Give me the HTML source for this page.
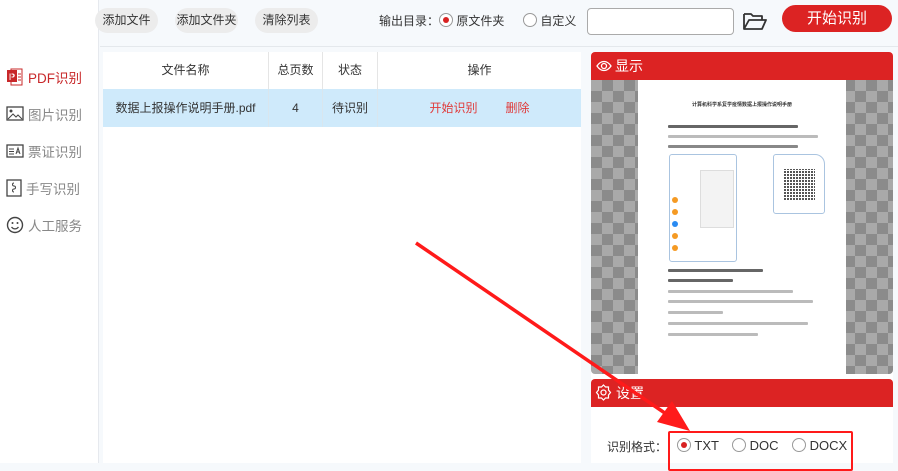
<!DOCTYPE html>
<html><head><meta charset="utf-8"><style>
*{margin:0;padding:0;box-sizing:border-box}
body{width:898px;height:463px;overflow:hidden;background:#f6f9fc;font-family:"Liberation Sans","Noto Sans CJK SC",sans-serif;position:relative;font-size:12px;color:#333}
.abs{position:absolute}
.side{left:0;top:0;width:99px;height:463px;background:#fff;border-right:1px solid #e6e9ee}
.nav{position:absolute;left:6px;font-size:13.5px;color:#888;display:flex;align-items:center;gap:4px;white-space:nowrap}
.btn{position:absolute;top:8px;height:25px;border-radius:13px;background:#ececec;font-size:12px;color:#333;text-align:center;line-height:25px;white-space:nowrap}
.radio{display:inline-block;width:14px;height:14px;border:1px solid #999;border-radius:50%;vertical-align:-2px;position:relative;background:#fff}
.radio.on::after{content:"";position:absolute;left:3px;top:3px;width:6px;height:6px;border-radius:50%;background:#d82222}
.tbl{left:103px;top:52px;width:478px;height:411px;background:#fff}
.th{position:absolute;top:0;height:37px;line-height:37px;text-align:center;font-size:12px;border-right:1px solid #e5e5e5}
.td{position:absolute;top:37px;height:38px;line-height:38px;text-align:center;font-size:12px;border-right:1px solid #d9e6ee;white-space:nowrap}
.chk{background-color:#a9a9a9;background-image:linear-gradient(45deg,#8b8b8b 25%,transparent 25%,transparent 75%,#8b8b8b 75%),linear-gradient(45deg,#8b8b8b 25%,transparent 25%,transparent 75%,#8b8b8b 75%);background-size:22px 22px;background-position:0 0,11px 11px}
.ln{position:absolute;height:3px;background:#bbb;border-radius:1px}
</style></head><body>
<div class="abs side"></div>
<div class="nav" style="top:67px;color:#c8282a"><svg width="18" height="18" viewBox="0 0 18 18"><rect x="1" y="2" width="10" height="12" fill="#c8282a"/><text x="3" y="12" font-size="9" fill="#fff" font-family="Liberation Sans" font-weight="bold">P</text><rect x="5" y="1" width="11" height="16" fill="none" stroke="#c8282a"/><path d="M12 6h3M12 9h3M12 12h3" stroke="#c8282a"/></svg>PDF识别</div>
<div class="nav" style="top:104px"><svg width="18" height="16" viewBox="0 0 18 16"><rect x="1" y="1" width="16" height="13" fill="none" stroke="#444" stroke-width="1.3"/><circle cx="5" cy="5" r="1.5" fill="#444"/><path d="M2 13l5-5 3 3 2-2 4 4" fill="none" stroke="#444"/></svg>图片识别</div>
<div class="nav" style="top:141px"><svg width="18" height="14" viewBox="0 0 18 14"><rect x="1" y="1" width="16" height="12" fill="none" stroke="#444" stroke-width="1.3"/><path d="M3 5h5M3 7.5h5M3 10h5M10 10l2-6 2 6M11 8h2" stroke="#444" fill="none"/></svg>票证识别</div>
<div class="nav" style="top:178px"><svg width="16" height="18" viewBox="0 0 16 18"><rect x="1" y="1" width="14" height="16" fill="none" stroke="#444" stroke-width="1.3"/><path d="M8 4c-2 0-2 3 0 3s2 3 0 3-2 3 0 3" fill="none" stroke="#444"/></svg>手写识别</div>
<div class="nav" style="top:215px"><svg width="18" height="18" viewBox="0 0 18 18"><circle cx="9" cy="9" r="7.5" fill="none" stroke="#444" stroke-width="1.4"/><circle cx="6.5" cy="7" r="1" fill="#444"/><circle cx="11.5" cy="7" r="1" fill="#444"/><path d="M5.5 11c2 2.5 5 2.5 7 0" fill="none" stroke="#444" stroke-width="1.3"/></svg>人工服务</div>

<div class="abs" style="left:100px;top:46px;width:798px;height:1px;background:#e4e8ec"></div>
<div class="btn" style="left:95px;width:63px">添加文件</div>
<div class="btn" style="left:175px;width:63px">添加文件夹</div>
<div class="btn" style="left:255px;width:63px">清除列表</div>
<div class="abs" style="left:379px;top:12px;font-size:12px;white-space:nowrap">输出目录：<span class="radio on"></span> 原文件夹</div>
<div class="abs" style="left:523px;top:12px;font-size:12px;white-space:nowrap"><span class="radio"></span> 自定义</div>
<div class="abs" style="left:587px;top:8px;width:147px;height:27px;border:1px solid #aaa;border-radius:4px;background:#fff"></div>
<svg class="abs" style="left:742px;top:11px" width="26" height="20" viewBox="0 0 26 20"><path d="M2 3h7l2 2h9v4M2 3v15h18l4-9H7L2 18" fill="none" stroke="#333" stroke-width="1.8" stroke-linejoin="round"/></svg>
<div class="abs" style="left:782px;top:5px;width:110px;height:27px;border-radius:14px;background:#dc2323;color:#fff;font-size:15px;text-align:center;line-height:27px">开始识别</div>

<div class="abs tbl">
<div class="th" style="left:0;width:166px">文件名称</div>
<div class="th" style="left:166px;width:54px">总页数</div>
<div class="th" style="left:220px;width:55px">状态</div>
<div class="th" style="left:275px;width:203px;border:none">操作</div>
<div class="abs" style="left:0;top:37px;width:478px;height:38px;background:#cfeafb"></div>
<div class="td" style="left:0;width:166px">数据上报操作说明手册.pdf</div>
<div class="td" style="left:166px;width:54px">4</div>
<div class="td" style="left:220px;width:55px">待识别</div>
<div class="td" style="left:275px;width:203px;border:none;color:#e03a3a"><span style="margin-right:28px">开始识别</span>删除</div>
</div>

<div class="abs" style="left:591px;top:52px;width:302px;height:411px;background:#fff"></div>
<div class="abs" style="left:591px;top:52px;width:302px;height:28px;background:#dc2323;border-radius:4px 4px 0 0;color:#fff;font-size:14px;line-height:28px;padding-left:24px">显示</div>
<svg class="abs" style="left:596px;top:59px" width="16" height="14" viewBox="0 0 16 14"><path d="M1 7c4-6 10-6 14 0-4 6-10 6-14 0z" fill="none" stroke="#fff" stroke-width="1.3"/><circle cx="8" cy="7" r="2.5" fill="none" stroke="#fff" stroke-width="1.3"/></svg>
<div class="abs chk" style="left:591px;top:80px;width:302px;height:294px;border-radius:0 0 4px 4px"></div>
<div class="abs" style="left:638px;top:80px;width:208px;height:294px;background:#fff">
<div style="position:absolute;top:21px;width:100%;text-align:center;font-size:5px;font-weight:bold;color:#333">计算机科学系复学疫情数据上报操作说明手册</div>
<div class="ln" style="left:30px;top:45px;width:130px;background:#666"></div>
<div class="ln" style="left:30px;top:55px;width:150px"></div>
<div class="ln" style="left:30px;top:65px;width:130px;background:#888"></div>
<div style="position:absolute;left:31px;top:74px;width:68px;height:108px;border:1px solid #aac4e0;border-radius:3px">
<div style="position:absolute;left:2px;top:42px;width:6px;height:6px;border-radius:50%;background:#f59a23"></div>
<div style="position:absolute;left:2px;top:54px;width:6px;height:6px;border-radius:50%;background:#f59a23"></div>
<div style="position:absolute;left:2px;top:66px;width:6px;height:6px;border-radius:50%;background:#2a8bf2"></div>
<div style="position:absolute;left:2px;top:78px;width:6px;height:6px;border-radius:50%;background:#f59a23"></div>
<div style="position:absolute;left:2px;top:90px;width:6px;height:6px;border-radius:50%;background:#f59a23"></div>
<div style="position:absolute;left:30px;top:15px;width:34px;height:58px;background:#f3f3f3;border:1px solid #ddd"></div>
</div>
<div style="position:absolute;left:135px;top:74px;width:52px;height:60px;border:1px solid #aac4e0;border-radius:3px 10px 3px 3px">
<div style="position:absolute;left:9px;top:14px;width:32px;height:32px;background:#555;background-image:repeating-linear-gradient(90deg,#fff 0 1px,transparent 1px 3px),repeating-linear-gradient(0deg,#fff 0 1px,transparent 1px 3px)"></div></div>
<div class="ln" style="left:30px;top:189px;width:95px;background:#666"></div>
<div class="ln" style="left:30px;top:199px;width:65px;background:#666"></div>
<div class="ln" style="left:30px;top:210px;width:125px"></div>
<div class="ln" style="left:30px;top:220px;width:145px"></div>
<div class="ln" style="left:30px;top:231px;width:55px"></div>
<div class="ln" style="left:30px;top:242px;width:140px"></div>
<div class="ln" style="left:30px;top:253px;width:90px"></div>
</div>

<div class="abs" style="left:591px;top:379px;width:302px;height:28px;background:#dc2323;border-radius:4px 4px 0 0;color:#fff;font-size:14px;line-height:28px;padding-left:25px">设置</div>
<svg class="abs" style="left:595px;top:384px" width="17" height="17" viewBox="0 0 17 17"><path d="M8.5 1l2 2h3v3l2 2.5-2 2.5v3h-3l-2 2-2-2h-3v-3l-2-2.5 2-2.5v-3h3z" fill="none" stroke="#fff" stroke-width="1.2"/><circle cx="8.5" cy="8.5" r="2.5" fill="none" stroke="#fff" stroke-width="1.2"/></svg>
<div class="abs" style="left:607px;top:438px;font-size:12px">识别格式：</div>
<div class="abs" style="left:677px;top:438px;font-size:13px"><span class="radio on"></span> TXT</div>
<div class="abs" style="left:732px;top:438px;font-size:13px"><span class="radio"></span> DOC</div>
<div class="abs" style="left:792px;top:438px;font-size:13px"><span class="radio"></span> DOCX</div>
<div class="abs" style="left:668px;top:431px;width:185px;height:40px;border:2px solid #ff1a1a;border-radius:2px"></div>
<svg class="abs" style="left:0;top:0" width="898" height="463"><line x1="416" y1="243" x2="675" y2="420" stroke="#ff1a1a" stroke-width="3.5"/><path d="M690 431L657 422 672 401z" fill="#ff1a1a"/></svg>
</body></html>
